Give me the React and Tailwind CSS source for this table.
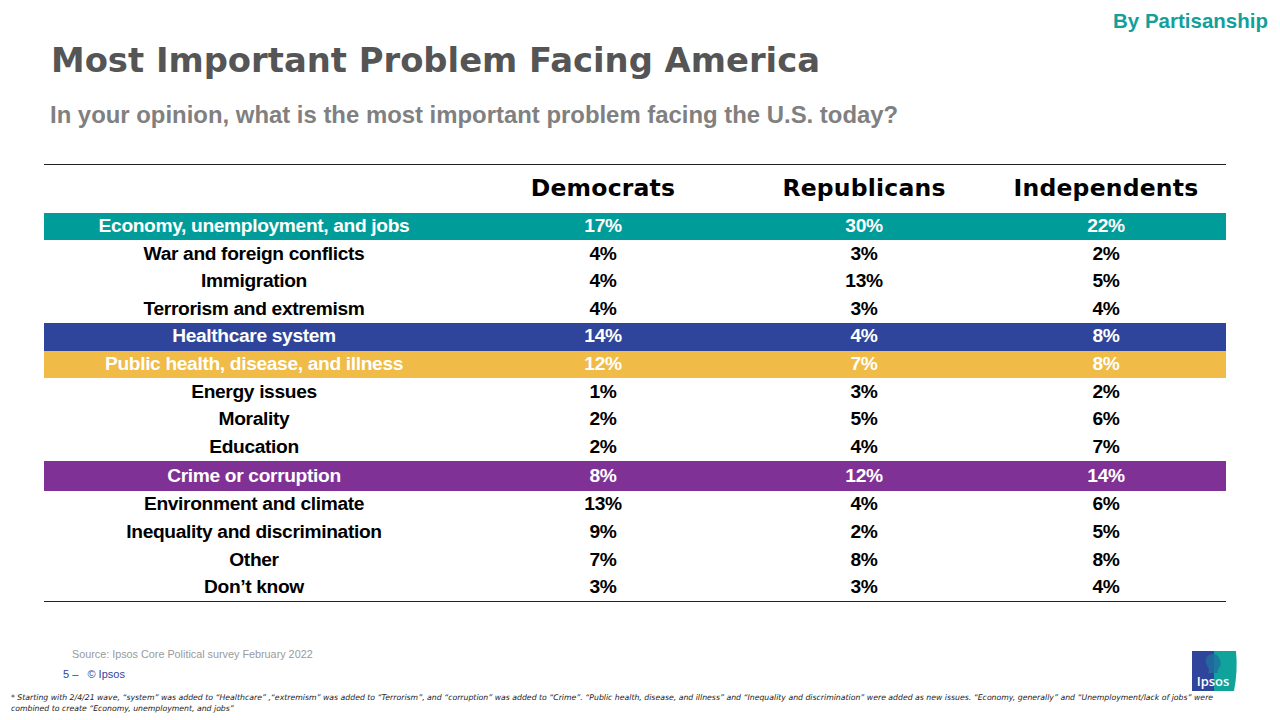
import React from 'react';

const rows = [
  { label: 'Economy, unemployment, and jobs', d: '17%', r: '30%', i: '22%', bg: 'bg-[#009c99]', text: 'text-white' },
  { label: 'War and foreign conflicts', d: '4%', r: '3%', i: '2%' },
  { label: 'Immigration', d: '4%', r: '13%', i: '5%' },
  { label: 'Terrorism and extremism', d: '4%', r: '3%', i: '4%' },
  { label: 'Healthcare system', d: '14%', r: '4%', i: '8%', bg: 'bg-[#2f459b]', text: 'text-white' },
  { label: 'Public health, disease, and illness', d: '12%', r: '7%', i: '8%', bg: 'bg-[#f0bb47]', text: 'text-white' },
  { label: 'Energy issues', d: '1%', r: '3%', i: '2%' },
  { label: 'Morality', d: '2%', r: '5%', i: '6%' },
  { label: 'Education', d: '2%', r: '4%', i: '7%' },
  { label: 'Crime or corruption', d: '8%', r: '12%', i: '14%', bg: 'bg-[#7f3196]', text: 'text-white', tall: true },
  { label: 'Environment and climate', d: '13%', r: '4%', i: '6%' },
  { label: 'Inequality and discrimination', d: '9%', r: '2%', i: '5%' },
  { label: 'Other', d: '7%', r: '8%', i: '8%' },
  { label: 'Don\u2019t know', d: '3%', r: '3%', i: '4%' },
];

function IpsosLogo() {
  return (
    <svg width="46" height="40" viewBox="0 0 46 40">
      <rect x="0" y="0" width="24" height="40" fill="#2f459b" />
      <path d="M22 0 H44 Q46 20 42 40 H22 Z" fill="#0fa39c" />
      <path d="M21 3 C15 3 13 8 14 12 C15 15 17 17 17 19 L16 22 H26 C25 20 26 18 27 17 C29 15 29 11 28 9 C27 5 24 3 21 3 Z" fill="#1f6f9f" opacity="0.8" />
      <text x="21" y="35" textAnchor="middle" fill="#ffffff" fontSize="13" fontFamily="'Open Sans', sans-serif" fontWeight="600">Ipsos</text>
    </svg>
  );
}

export default function App() {
  return (
    <div className="w-[1280px] h-[720px] bg-white overflow-hidden flex flex-col" style={{ fontFamily: "'Liberation Sans', Arial, sans-serif" }}>
      <div className="flex justify-end pr-[12px] pt-[11px] h-[34px]">
        <span className="text-[#12a09c] font-bold text-[20.5px] leading-none">By Partisanship</span>
      </div>
      <h1
        className="pl-[51px] mt-[10px] text-[#555555] font-bold text-[33.8px] leading-none"
        style={{ fontFamily: "'DejaVu Sans', sans-serif" }}
      >
        Most Important Problem Facing America
      </h1>
      <p className="pl-[50px] mt-[25px] text-[#808080] font-bold text-[23.9px] leading-none">
        In your opinion, what is the most important problem facing the U.S. today?
      </p>

      <div className="mt-[37px] mx-[44px] w-[1182px] border-t border-b border-[#222222]">
        <div
          className="flex h-[48px] items-center text-black font-bold text-[23.5px] tracking-[0.2px]"
          style={{ fontFamily: "'DejaVu Sans', sans-serif" }}
        >
          <div className="w-[420px]" />
          <div className="w-[278px] text-center">Democrats</div>
          <div className="w-[244px] text-center">Republicans</div>
          <div className="w-[240px] text-center">Independents</div>
        </div>
        {rows.map((row) => (
          <div
            key={row.label}
            className={`flex items-center font-bold text-[19.2px] tracking-[-0.35px] ${row.tall ? 'h-[30px]' : 'h-[27.6px]'} ${row.bg || ''} ${row.text || 'text-black'}`}
          >
            <div className="w-[420px] text-center">{row.label}</div>
            <div className="w-[278px] text-center">{row.d}</div>
            <div className="w-[244px] text-center">{row.r}</div>
            <div className="w-[240px] text-center">{row.i}</div>
          </div>
        ))}
      </div>

      <div className="flex items-start justify-between pr-[42px] mt-[45px] h-[45px]">
        <div className="flex flex-col pt-[2px]">
          <div className="pl-[72px] text-[#9a9a9a] text-[10.8px] leading-none">
            Source: Ipsos Core Political survey February 2022
          </div>
          <div className="pl-[63px] mt-[9px] text-[#2f459b] text-[11px] leading-none">
            5 &ndash;&nbsp;&nbsp; &copy; Ipsos
          </div>
        </div>
        <div className="mt-[4px]">
          <IpsosLogo />
        </div>
      </div>
      <div className="pl-[11px] text-[#222222] italic text-[7.75px] leading-[11px]" style={{ fontFamily: "'DejaVu Sans', sans-serif" }}>
        * Starting with 2/4/21 wave, &ldquo;system&rdquo; was added to &ldquo;Healthcare&rdquo; ,&ldquo;extremism&rdquo; was added to &ldquo;Terrorism&rdquo;, and &ldquo;corruption&rdquo; was added to &ldquo;Crime&rdquo;. &ldquo;Public health, disease, and illness&rdquo; and &ldquo;Inequality and discrimination&rdquo; were added as new issues. &ldquo;Economy, generally&rdquo; and &ldquo;Unemployment/lack of jobs&rdquo; were
        <br />
        combined to create &ldquo;Economy, unemployment, and jobs&rdquo;
      </div>
    </div>
  );
}
